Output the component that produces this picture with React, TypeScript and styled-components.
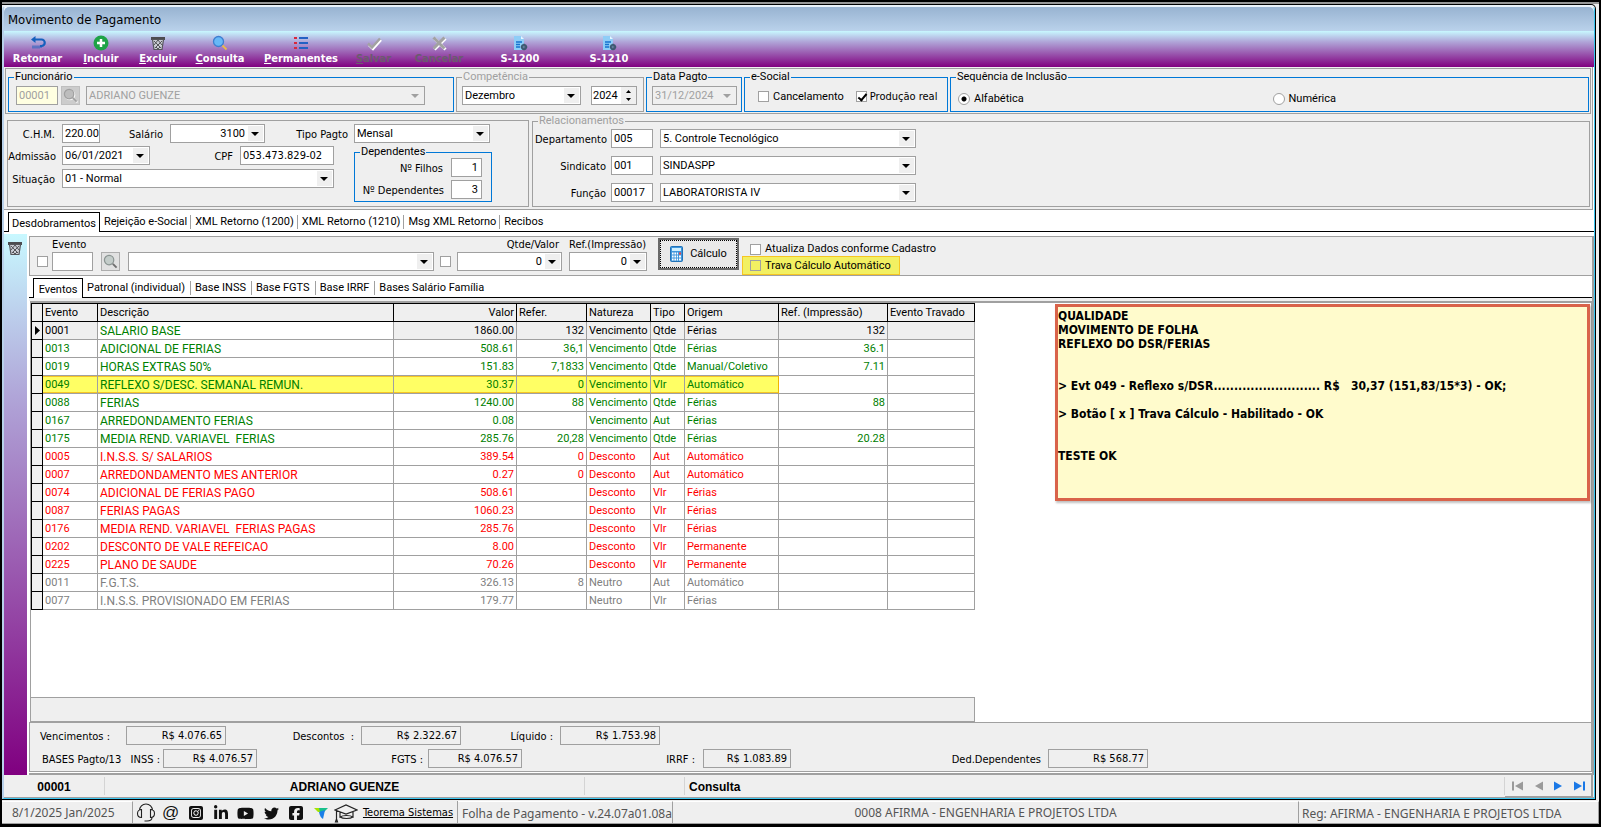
import React from "react";
import styled, { createGlobalStyle, css } from "styled-components";
import { FaSquareFacebook, FaSquareInstagram, FaLinkedinIn, FaTwitter, FaYoutube } from "react-icons/fa6";

const sans = `Roboto, "Liberation Sans", sans-serif`;
const label = `"DejaVu Sans Condensed", "DejaVu Sans", sans-serif`;
const statusFont = `"Noto Sans", "Open Sans", sans-serif`;
const face = "#efefef";
const line = "#a0a0a0";
const accent = "#0078d7";
const amber = "#f6c623";

const Global = createGlobalStyle`
  * { box-sizing: border-box; }
  body { margin: 0; background: #000; font: 11px/14px ${sans}; color: #000; }
  button, input, select { font: inherit; color: inherit; margin: 0; padding: 0; border-radius: 0; }
`;

/* ---------- frame ---------- */

const Frame = styled.div`
  min-height: 100vh;
  display: flex;
  flex-direction: column;
  padding: 2px 2px 3px;
  background: #000;
`;
const Desktop = styled.div`
  flex: 1;
  display: flex;
  flex-direction: column;
  border-top: 2px solid #989898;
  background: ${face};
`;
const Shell = styled.div`
  flex: 1;
  display: flex;
  flex-direction: column;
  margin-right: 3px;
  border: solid #000;
  border-width: 1px 1px 1px 0;
  border-radius: 0 5px 0 0;
  overflow: hidden;
`;
const WindowBox = styled.main`
  flex: 1;
  display: flex;
  flex-direction: column;
  border-style: solid;
  border-width: 2px 1px 1px 2px;
  border-color: #eaf2fa #3cc6f0 #3cc6f0 #b9d1ea;
  border-radius: 5px 5px 0 0;
  background: #fff;
`;
const TitleBar = styled.h1`
  margin: 0;
  height: 24px;
  padding: 1px 4px;
  border-radius: 5px 5px 0 0;
  background: linear-gradient(#98b3d1, #bad2eb);
  font: 400 13px/24px ${label};
`;

/* ---------- toolbar ---------- */

const Toolbar = styled.nav`
  height: 36px;
  display: flex;
  background: linear-gradient(#c8f8ff, #b0a5d8 30%, #800080);
`;
const ToolButton = styled.button<{ $width: number }>`
  width: ${(p) => p.$width}px;
  display: flex;
  flex-direction: column;
  align-items: center;
  padding-top: 4px;
  border: 0;
  background: none;
  color: #fff;
  font: 700 11px/15px ${label};
  &:disabled { color: #6b5a6e; }
  svg { width: 16px; height: 16px; display: block; flex: none; }
`;

/* ---------- form controls ---------- */

const Group = styled.fieldset<{ $muted?: boolean; $width?: number; $side?: number; $top?: number }>`
  flex: ${(p) => (p.$width ? "none" : "1")};
  width: ${(p) => (p.$width ? p.$width + "px" : "auto")};
  min-width: 0;
  margin: 0;
  padding: ${(p) => p.$top ?? 3}px ${(p) => p.$side ?? 7}px 0;
  border: 1px solid ${(p) => (p.$muted ? line : accent)};
  legend {
    margin-left: ${(p) => 5 - (p.$side ?? 7)}px;
    padding: 0 1px;
    line-height: 12px;
    color: ${(p) => (p.$muted ? "#a0a0a0" : "#000")};
  }
`;
const Line = styled.div`
  display: flex;
  align-items: center;
`;
const Space = styled.span<{ $w: number }>`
  flex: none;
  width: ${(p) => p.$w}px;
`;
const Caption = styled.label<{ $width?: number; $pad?: number }>`
  flex: none;
  width: ${(p) => (p.$width ? p.$width + "px" : "auto")};
  padding-top: 2px;
  padding-right: ${(p) => p.$pad ?? 0}px;
  text-align: right;
  white-space: pre;
  font-family: ${label};
`;
const TextBox = styled.input<{ $width: number; $right?: boolean; $tahoma?: boolean; $tone?: string }>`
  flex: none;
  width: ${(p) => p.$width}px;
  height: 19px;
  padding: 0 ${(p) => (p.$right ? 3 : 0)}px 0 2px;
  border: 1px solid ${line};
  background: ${(p) => p.$tone ?? "#fff"};
  text-align: ${(p) => (p.$right ? "right" : "left")};
  font-family: ${(p) => (p.$tahoma ? label : sans)};
  &:disabled { color: #a0a0a0; }
`;
const ComboBox = styled.span<{ $width: number; $right?: boolean; $off?: boolean }>`
  position: relative;
  flex: none;
  display: block;
  width: ${(p) => p.$width}px;
  height: 19px;
  border: 1px solid ${line};
  background: ${(p) => (p.$off ? face : "#fff")};
  select {
    position: relative;
    z-index: 1;
    display: block;
    width: 100%;
    height: 100%;
    padding: 1px 19px 0 2px;
    border: 0;
    appearance: none;
    background: transparent;
    text-align-last: ${(p) => (p.$right ? "right" : "left")};
    opacity: 1;
  }
  select:disabled { color: #a0a0a0; }
  &::before {
    content: "";
    position: absolute;
    inset: 1px 1px 1px auto;
    width: 15px;
    background: ${face};
  }
  &::after {
    content: "";
    position: absolute;
    right: 5px;
    top: 7px;
    border: 4px solid transparent;
    border-top-color: ${(p) => (p.$off ? "#a0a0a0" : "#000")};
    border-bottom: 0;
  }
`;
const Combo = (p: { id: string; value: string; width: number; right?: boolean; off?: boolean; name?: string }) => (
  <ComboBox $width={p.width} $right={p.right} $off={p.off}>
    <select id={p.id} aria-label={p.name} disabled={p.off} defaultValue={p.value}>
      <option>{p.value}</option>
    </select>
  </ComboBox>
);
const Check = styled.input<{ $clear?: boolean }>`
  appearance: none;
  flex: none;
  position: relative;
  width: 11px;
  height: 11px;
  border: 1px solid ${line};
  background: ${(p) => (p.$clear ? "transparent" : "#fff")};
  &:checked::before {
    content: "";
    position: absolute;
    left: 3px;
    top: 0;
    width: 3px;
    height: 7px;
    border: solid #000;
    border-width: 0 2px 2px 0;
    transform: rotate(40deg);
  }
`;
const Radio = styled.input`
  appearance: none;
  flex: none;
  width: 12px;
  height: 12px;
  border: 1px solid ${line};
  border-radius: 50%;
  background: #fff;
  &:checked { background: radial-gradient(#000 0 2px, #fff 3px); }
`;
const Choice = styled.label<{ $tahoma?: boolean; $gap?: number }>`
  display: flex;
  align-items: center;
  gap: ${(p) => p.$gap ?? 4}px;
  white-space: nowrap;
  font-family: ${(p) => (p.$tahoma ? label : sans)};
`;
const SmallButton = styled.button`
  flex: none;
  width: 19px;
  height: 19px;
  display: grid;
  place-items: center;
  border: 1px solid #adadad;
  background: #e1e1e1;
  &:disabled { background: #ccc; border-color: #bfbfbf; }
`;
const SpinBox = styled.span`
  display: flex;
  width: 46px;
  height: 19px;
  border: 1px solid ${line};
  background: #fff;
  input { width: 29px; padding: 0 0 0 1px; border: 0; background: none; }
`;
const SpinButtons = styled.span`
  display: flex;
  flex-direction: column;
  button {
    flex: 1;
    width: 15px;
    display: grid;
    place-items: center;
    border: 0;
    background: ${face};
  }
  svg { display: block; }
`;

/* ---------- header panels ---------- */

const HeaderArea = styled.div`
  margin-right: 1px;
  border-right: 1px solid ${line};
  border-bottom: 1px solid ${line};
  background: ${face};
`;
const EmployeePanel = styled.section`
  display: flex;
  gap: 2px;
  margin: 1px 1px 0 1px;
  padding: 2px 1px 1px 2px;
  border: 1px solid ${line};
`;
const GroupRow = styled.div`
  display: flex;
  align-items: center;
  height: 24px;
  padding-bottom: 5px;
`;
const RadioRow = styled.div`
  display: grid;
  grid-template-columns: 1fr 1fr;
  gap: 6px;
  align-items: center;
  height: 24px;
  padding-top: 2px;
`;
const DetailPanel = styled.section`
  display: flex;
  gap: 3px;
  padding: 1px 2px 2px 3px;
`;
const ContractBox = styled.div`
  width: 522px;
  margin-top: 5px;
  padding: 3px 0 4px;
  border: 1px solid ${line};
  display: flex;
  flex-direction: column;
  gap: 3px;
`;
const ContractBody = styled.div`
  display: flex;
  gap: 20px;
`;
const Stack = styled.div<{ $gap: number }>`
  display: flex;
  flex-direction: column;
  gap: ${(p) => p.$gap}px;
`;
const Dependents = styled(Group)`
  padding: 0 9px 2px 3px;
  legend { margin-left: 2px; }
`;

/* ---------- tabs ---------- */

const Tabs = styled.div<{ $pad: number }>`
  display: flex;
  align-items: flex-end;
  height: 22px;
  padding-left: 5px;
  border-bottom: 1px solid #000;
  background: #fff;
  span { padding-right: ${(p) => p.$pad}px; }
`;
const Tab = styled.button<{ $active?: boolean }>`
  height: 20px;
  padding: 2px 0 0;
  border: 0;
  background: #fff;
  white-space: nowrap;
  span {
    display: block;
    padding-left: 4px;
    border-right: 1px solid ${line};
  }
  &:last-child span { border: 0; }
  ${(p) =>
    p.$active &&
    css`
      min-width: 50px;
      margin: 0 0 -1px -1px;
      border: solid #000;
      border-width: 1px 1px 0 1px;
      span { border: 0; padding: 0 3px; }
    `}
`;

/* ---------- body ---------- */

const Body = styled.div`
  flex: 1;
  display: flex;
  gap: 2px;
  padding-top: 2px;
`;
const Rail = styled.aside`
  width: 23px;
  padding-top: 6px;
  background: linear-gradient(#c8f8ff, #b0a5d8 30%, #800080);
  button { display: block; width: 100%; padding-right: 1px; border: 0; background: none; }
  svg { display: block; width: 16px; height: 16px; margin: 0 auto; }
`;
const Work = styled.div`
  flex: 1;
  min-width: 0;
  display: flex;
  flex-direction: column;
  margin-top: 2px;
  border-right: 2px solid ${line};
  border-bottom: 2px solid ${line};
`;
const FilterBar = styled.section`
  display: flex;
  align-items: flex-end;
  height: 40px;
  padding: 0 7px 4px;
  border: 1px solid ${line};
  border-right: 0;
  background: ${face};
`;
const Boxed = styled.span`
  display: flex;
  align-items: center;
  height: 19px;
`;
const Field = styled.div<{ $end?: boolean }>`
  display: flex;
  flex-direction: column;
  align-items: ${(p) => (p.$end ? "flex-end" : "flex-start")};
`;
const CalcButton = styled.button`
  width: 81px;
  height: 32px;
  margin-bottom: 1px;
  border: 2px solid #696969;
  background: #e9e9e9;
  span {
    display: flex;
    align-items: center;
    justify-content: center;
    gap: 7px;
    height: 28px;
    border: 1px dotted #000;
  }
`;
const Options = styled.div`
  align-self: stretch;
  margin: 0 0 -4px 3px;
  display: flex;
  flex-direction: column;
  align-items: flex-start;
  justify-content: flex-end;
`;
const Option = styled.div<{ $marked?: boolean }>`
  height: ${(p) => (p.$marked ? 19 : 14)}px;
  padding: 0 8px 0 7px;
  display: flex;
  align-items: center;
  border: solid ${(p) => (p.$marked ? amber : "transparent")};
  border-width: ${(p) => (p.$marked ? "1px" : "0 1px")};
  background: ${(p) => (p.$marked ? "#f2f062" : "transparent")};
`;
const GridArea = styled.section`
  flex: 1;
  display: flex;
  margin-left: 1px;
  border: solid ${line};
  border-width: 2px 1px 0 1px;
  background: #fff;
`;
const TabGap = styled.div`
  height: 3px;
  background: ${face};
`;
const GridColumn = styled.div`
  flex: none;
  width: 944px;
  display: flex;
  flex-direction: column;
  justify-content: space-between;
`;
const GridFooter = styled.div`
  height: 25px;
  border: 1px solid ${line};
  border-left: 0;
  background: ${face};
`;
const Table = styled.table`
  width: 100%;
  table-layout: fixed;
  border-collapse: separate;
  border-spacing: 0;
  border-top: 1px solid #000;
  border-left: 1px solid #000;
  line-height: 16px;
  th { background: ${face}; border-color: #000; font-weight: 400; }
`;
const Cell = styled.td<{ $right?: boolean; $upper?: boolean; $tone?: string }>`
  height: 18px;
  padding: 1px 2px 0;
  border: solid ${line};
  border-width: 0 1px 1px 0;
  overflow: hidden;
  white-space: pre;
  text-align: ${(p) => (p.$right ? "right" : "left")};
  font-size: ${(p) => (p.$upper ? 12 : 11)}px;
  background: ${(p) => p.$tone ?? "transparent"};
`;
const MarkCell = styled.td`
  height: 18px;
  padding: 0 0 0 3px;
  border: solid #000;
  border-width: 0 1px 1px 0;
  background: ${face};
  svg { display: block; }
`;
const Row = styled.tr<{ $color: string; $marked?: boolean }>`
  color: ${(p) => p.$color};
  ${(p) =>
    p.$marked &&
    css`
      ${Cell}:nth-child(-n + 8) {
        background: #ffff64;
        box-shadow: inset 0 1px ${amber}, inset 0 -1px ${amber};
      }
      ${Cell}:nth-child(8) {
        border-right-color: #f0b400;
      }
    `}
`;
const Positive = styled.span`
  color: #008000;
`;
const Note = styled.pre`
  flex: 1;
  align-self: flex-start;
  min-width: 0;
  height: 197px;
  margin: 1px 1px 0 80px;
  padding: 2px 0;
  border: 3px solid #d9634a;
  background: #fffbcc;
  box-shadow: 1px 2px 2px rgba(0, 0, 0, 0.25);
  font: 700 12px/14px ${label};
`;
const Summary = styled.section`
  display: flex;
  flex-direction: column;
  gap: 4px;
  height: 50px;
  margin-bottom: 1px;
  padding-top: 3px;
  border: 1px solid ${line};
  background: ${face};
`;

/* ---------- status bars ---------- */

const RecordBar = styled.footer`
  display: flex;
  height: 23px;
  border-bottom: 1px solid ${line};
  background: ${face};
  font: 700 12px/21px "Liberation Sans", sans-serif;
`;
const RecordCell = styled.div<{ $width?: number; $start?: boolean }>`
  flex: ${(p) => (p.$width ? "none" : "1")};
  width: ${(p) => (p.$width ? p.$width + "px" : "auto")};
  margin: 2px 0;
  padding: 0 4px;
  border-right: 1px solid #d4d4d4;
  text-align: ${(p) => (p.$start ? "left" : "center")};
`;
const Navigator = styled.div`
  display: flex;
  width: 88px;
  margin-right: 1px;
  padding: 0 3px;
  border: solid ${line};
  border-width: 0 2px 1px 0;
  button { flex: 1; display: grid; place-items: center; border: 0; background: none; }
`;
const AppBar = styled.footer`
  display: flex;
  height: 24px;
  padding-top: 1px;
  border-bottom: 1px solid ${line};
  background: ${face};
  color: #555;
  font: 12px/20px ${statusFont};
`;
const AppCell = styled.div<{ $width?: number; $center?: boolean; $pad?: number; $low?: boolean }>`
  flex: ${(p) => (p.$width ? "none" : "1")};
  width: ${(p) => (p.$width ? p.$width + "px" : "auto")};
  padding: ${(p) => (p.$low ? 2 : 1)}px 0 0 ${(p) => p.$pad ?? 0}px;
  border-top: 1px solid #fff;
  border-right: 1px solid ${line};
  text-align: ${(p) => (p.$center ? "center" : "left")};
  white-space: nowrap;
`;
const Social = styled.div`
  display: flex;
  align-items: center;
  flex: none;
  width: 226px;
  padding-top: 2px;
  a { flex: 1; display: grid; place-items: center; color: #111; text-decoration: none; font: 17px/20px "Liberation Sans", sans-serif; }
`;
const SiteLink = styled.a`
  flex: none;
  width: 99px;
  border-right: 1px solid ${line};
  color: #000;
  font: 11px/24px ${label};
  text-align: center;
  white-space: nowrap;
`;

/* ---------- drawings ---------- */

const ReturnIcon = () => (
  <svg viewBox="0 0 16 16"><path d="M3 4.500h8.500a2.800 2.800 0 0 1 0 6.500H10" fill="none" stroke="#1560bd" strokeWidth="2.200" /><path d="M5.500 1v7L1 4.500z" fill="#1560bd" /><path d="M3 10.500v3M5 10.500v3M7 10.500v3M9 10.500v3M11 10.500v2.500" stroke="#1560bd" /></svg>
);
const AddIcon = () => (
  <svg viewBox="0 0 16 16"><circle cx="8" cy="8" r="7.500" fill="#1fa347" /><path d="M8 4v8M4 8h8" stroke="#fff" strokeWidth="2.500" /></svg>
);
const BinIcon = () => (
  <svg viewBox="0 0 16 16"><path d="M1 2h14v3H1z" fill="#4c4c50" /><path d="M2.500 4.500l1.500 10h8l1.500-10z" fill="#c9ccd4" stroke="#55555a" strokeWidth="1.200" /><path d="M4 6l7 7M8 5l4 5M12 6l-7 7M8 5l-4 5M6 12l2 2 2-2" stroke="#55555a" fill="none" /></svg>
);
const LensIcon = ({ dim, size = 16 }: { dim?: boolean; size?: number }) => (
  <svg viewBox="0 0 16 16" width={size} height={size}><circle cx="6.500" cy="6.500" r="5" fill={dim ? "#c3ccc9" : "#67b8f7"} stroke={dim ? "#8b9492" : "#3e7fd0"} strokeWidth="1.300" /><path d="M10.500 10.500l4 4" stroke={dim ? "#6e6e6e" : "#e8b84c"} strokeWidth="2" /></svg>
);
const FadedLens = () => (
  <svg viewBox="0 0 16 16" width="15" height="15" fill="none"><circle cx="7.500" cy="7.500" r="5" stroke="#f4f4f4" strokeWidth="1.300" /><path d="M11.500 11.500l4 4" stroke="#f4f4f4" strokeWidth="2" /><circle cx="6.500" cy="6.500" r="5" fill="#bdbdbd" stroke="#a0a0a0" strokeWidth="1.300" /><path d="M10.500 10.500l4 4" stroke="#a0a0a0" strokeWidth="2" /></svg>
);
const ListIcon = () => (
  <svg viewBox="0 0 16 16"><path d="M1 3h3M1 8h3M1 13h3" stroke="#d8283c" strokeWidth="2.200" /><path d="M6 3h9M6 8h9M6 13h9" stroke="#2461c4" strokeWidth="2.200" /></svg>
);
const TickIcon = () => (
  <svg viewBox="0 0 16 16"><path d="M3 10l4 4 8-9" fill="none" stroke="#fff" strokeWidth="2.500" /><path d="M2 8.500l4 4 8-9" fill="none" stroke="#a2a2a2" strokeWidth="2.500" /></svg>
);
const CrossIcon = () => (
  <svg viewBox="0 0 16 16"><path d="M3.500 3.500l11 11M14.500 3.500l-11 11" stroke="#fff" strokeWidth="3" /><path d="M2.500 2.500l11 11M13.500 2.500l-11 11" stroke="#a2a2a2" strokeWidth="3" /></svg>
);
const DocIcon = () => (
  <svg viewBox="0 0 16 16"><path d="M2 1h7l3 3v11H2z" fill="#8fcdf7" /><path d="M9 1v3h3z" fill="#e6f6ff" /><path d="M4 7h6M4 9.500h4M4 12h4" stroke="#1573cf" strokeWidth="1.300" /><circle cx="12" cy="12" r="2.200" fill="none" stroke="#3c5870" strokeWidth="1.800" /><path d="M12 8.500v7M8.500 12h7" stroke="#3c5870" strokeWidth=".8" /></svg>
);
const CalcIcon = () => (
  <svg width="13" height="16" viewBox="0 0 13 16"><rect x=".5" y=".5" width="12" height="15" rx="1" fill="#3f97dd" stroke="#2173b8" /><path d="M2 2h9v3H2z" fill="#cdefff" /><path d="M2 7.500h6M2 10.500h6M2 13.500h6" stroke="#fff" strokeWidth="1.800" strokeDasharray="1.600 .8" /><path d="M9 7.500h2" stroke="#e44" strokeWidth="1.800" /><path d="M9 10.500h2M9 13.500h2" stroke="#fff" strokeWidth="1.800" /></svg>
);
const Headset = () => (
  <svg width="20" height="20" viewBox="0 0 20 20" fill="none" stroke="#222" strokeWidth="1.100"><path d="M3.500 7.500a6.500 6.500 0 0 1 13 0M5.500 6.500C3 6.500 1.500 8 1.500 10.500s1.500 4 4 4zM14.500 6.500c2.500 0 4 1.500 4 4s-1.500 4-4 4zM16 14.500c0 2.500-2 3.500-5 3.500M8.500 18h3" /></svg>
);
const Bird = () => (
  <svg width="14" height="13" viewBox="0 0 14 13"><path d="M0 1h6l2 4H4z" fill="#a4e400" /><path d="M5 1h9l-4 4H6z" fill="#19c08c" /><path d="M5 5l6-2-2 9c-2-1-3-3-4-7z" fill="#1a7fe8" /></svg>
);
const Cap = () => (
  <svg width="24" height="20" viewBox="0 0 24 20" fill="none" stroke="#222" strokeWidth="1.200"><path d="M1 7l11-5 11 5-11 4zM6 9v5c3-2 10-2 13 0V9M6 14c3 2 10 2 13 0M2.500 7.500V16M1.500 19l1-3 1 3z" /></svg>
);
const Arrow = ({ back, bar }: { back?: boolean; bar?: boolean }) => (
  <svg width="13" height="10" viewBox="0 0 13 10" fill={back ? "#9a9a9a" : "#1a78e6"}>
    {back ? <path d="M11 .5v9L3 5z" /> : <path d="M2 .5v9L10 5z" />}
    {bar && <path d={back ? "M0 .5h2v9H0z" : "M11 .5h2v9h-2z"} />}
  </svg>
);
const Pointer = () => (
  <svg width="6" height="9" viewBox="0 0 6 9"><path d="M0 0v9l5-4.500z" /></svg>
);
const Spin = ({ down }: { down?: boolean }) => (
  <svg width="5" height="3" viewBox="0 0 5 3"><path d={down ? "M0 0h5L2.500 3z" : "M0 3h5L2.500 0z"} /></svg>
);

/* ---------- data ---------- */

const tools: { text: string; key?: boolean; width: number; icon: React.ReactNode; off?: boolean }[] = [
  { text: "Retornar", width: 67, icon: <ReturnIcon /> },
  { text: "Incluir", key: true, width: 60, icon: <AddIcon /> },
  { text: "Excluir", key: true, width: 54, icon: <BinIcon /> },
  { text: "Consulta", key: true, width: 70, icon: <LensIcon /> },
  { text: "Permanentes", key: true, width: 92, icon: <ListIcon /> },
  { text: "Salvar", key: true, width: 53, icon: <TickIcon />, off: true },
  { text: "Cancelar", width: 78, icon: <CrossIcon />, off: true },
  { text: "S-1200", width: 84, icon: <DocIcon /> },
  { text: "S-1210", width: 94, icon: <DocIcon /> },
];

const columns = [11, 55, 296, 123, 70, 64, 34, 94, 109, 87];
const heads = ["Evento", "Descrição", "Valor", "Refer.", "Natureza", "Tipo", "Origem", "Ref. (Impressão)", "Evento Travado"];
const events: string[][] = [
  ["0001", "SALARIO BASE", "1860.00", "132", "Vencimento", "Qtde", "Férias", "132"],
  ["0013", "ADICIONAL DE FERIAS", "508.61", "36,1", "Vencimento", "Qtde", "Férias", "36.1"],
  ["0019", "HORAS EXTRAS 50%", "151.83", "7,1833", "Vencimento", "Qtde", "Manual/Coletivo", "7.11"],
  ["0049", "REFLEXO S/DESC. SEMANAL REMUN.", "30.37", "0", "Vencimento", "Vlr", "Automático", ""],
  ["0088", "FERIAS", "1240.00", "88", "Vencimento", "Qtde", "Férias", "88"],
  ["0167", "ARREDONDAMENTO FERIAS", "0.08", "", "Vencimento", "Aut", "Férias", ""],
  ["0175", "MEDIA REND. VARIAVEL  FERIAS", "285.76", "20,28", "Vencimento", "Qtde", "Férias", "20.28"],
  ["0005", "I.N.S.S. S/ SALARIOS", "389.54", "0", "Desconto", "Aut", "Automático", ""],
  ["0007", "ARREDONDAMENTO MES ANTERIOR", "0.27", "0", "Desconto", "Aut", "Automático", ""],
  ["0074", "ADICIONAL DE FERIAS PAGO", "508.61", "", "Desconto", "Vlr", "Férias", ""],
  ["0087", "FERIAS PAGAS", "1060.23", "", "Desconto", "Vlr", "Férias", ""],
  ["0176", "MEDIA REND. VARIAVEL  FERIAS PAGAS", "285.76", "", "Desconto", "Vlr", "Férias", ""],
  ["0202", "DESCONTO DE VALE REFEICAO", "8.00", "", "Desconto", "Vlr", "Permanente", ""],
  ["0225", "PLANO DE SAUDE", "70.26", "", "Desconto", "Vlr", "Permanente", ""],
  ["0011", "F.G.T.S.", "326.13", "8", "Neutro", "Aut", "Automático", ""],
  ["0077", "I.N.S.S. PROVISIONADO EM FERIAS", "179.77", "", "Neutro", "Vlr", "Férias", ""],
];
const tone: Record<string, string> = { Vencimento: "#008000", Desconto: "#ff0000", Neutro: "#808080" };

const totals = [
  [
    { id: "venc", text: "Vencimentos :", value: "R$ 4.076.65", before: 96, pad: 16, width: 100 },
    { id: "desc", text: "Descontos  :", value: "R$ 2.322.67", before: 135, pad: 7, width: 100 },
    { id: "liq", text: "Líquido :", value: "R$ 1.753.98", before: 99, pad: 7, width: 100 },
  ],
  [
    { id: "inss", text: "BASES Pagto/13   INSS :", value: "R$ 4.076.57", before: 133, pad: 3, width: 94 },
    { id: "fgts", text: "FGTS :", value: "R$ 4.076.57", before: 171, pad: 5, width: 94 },
    { id: "irrf", text: "IRRF :", value: "R$ 1.083.89", before: 181, pad: 8, width: 88 },
    { id: "ded", text: "Ded.Dependentes", value: "R$ 568.77", before: 257, pad: 7, width: 100 },
  ],
];

const note = `QUALIDADE
MOVIMENTO DE FOLHA
REFLEXO DO DSR/FERIAS


> Evt 049 - Reflexo s/DSR.......................... R$   30,37 (151,83/15*3) - OK;

> Botão [ x ] Trava Cálculo - Habilitado - OK


TESTE OK`;

const relations = [
  { text: "Departamento", code: "005", name: "5. Controle Tecnológico" },
  { text: "Sindicato", code: "001", name: "SINDASPP" },
  { text: "Função", code: "00017", name: "LABORATORISTA IV" },
];

const TabStrip = ({ items, pad }: { items: string[]; pad: number }) => (
  <Tabs role="tablist" $pad={pad}>
    {items.map((t, i) => (
      <Tab key={t} role="tab" aria-selected={i === 0} $active={i === 0}><span>{t}</span></Tab>
    ))}
  </Tabs>
);

export default function App() {
  return (
    <Frame>
      <Global />
      <Desktop>
        <Shell>
          <WindowBox>
            <TitleBar>Movimento de Pagamento</TitleBar>
            <Toolbar>
              {tools.map((t) => (
                <ToolButton key={t.text} $width={t.width} disabled={t.off}>
                  {t.icon}
                  <span>{t.key ? <><u>{t.text[0]}</u>{t.text.slice(1)}</> : t.text}</span>
                </ToolButton>
              ))}
            </Toolbar>

            <HeaderArea>
              <EmployeePanel>
                <Group $width={446}>
                  <legend>Funcionário</legend>
                  <GroupRow>
                    <TextBox $width={42} $tone="#ffffe1" aria-label="Código" defaultValue="00001" disabled />
                    <Space $w={3} />
                    <SmallButton disabled aria-label="Procurar funcionário"><FadedLens /></SmallButton>
                    <Space $w={6} />
                    <Combo id="func" name="Funcionário" value="ADRIANO GUENZE" width={339} off />
                  </GroupRow>
                </Group>
                <Group $muted $width={188} $side={5}>
                  <legend>Competência</legend>
                  <GroupRow>
                    <Combo id="mes" name="Mês" value="Dezembro" width={119} />
                    <Space $w={10} />
                    <SpinBox>
                      <input aria-label="Ano" defaultValue="2024" />
                      <SpinButtons>
                        <button aria-label="Mais"><Spin /></button>
                        <button aria-label="Menos"><Spin down /></button>
                      </SpinButtons>
                    </SpinBox>
                  </GroupRow>
                </Group>
                <Group $width={96} $side={5}>
                  <legend>Data Pagto</legend>
                  <GroupRow><Combo id="data" name="Data Pagto" value="31/12/2024" width={85} off /></GroupRow>
                </Group>
                <Group $width={204} $side={13} $top={4}>
                  <legend>e-Social</legend>
                  <GroupRow>
                    <Choice><Check type="checkbox" />Cancelamento</Choice>
                    <Space $w={12} />
                    <Choice $tahoma $gap={3}><Check type="checkbox" defaultChecked />Produção real</Choice>
                  </GroupRow>
                </Group>
                <Group>
                  <legend>Sequência de Inclusão</legend>
                  <RadioRow>
                    <Choice><Radio type="radio" name="seq" defaultChecked />Alfabética</Choice>
                    <Choice><Radio type="radio" name="seq" />Numérica</Choice>
                  </RadioRow>
                </Group>
              </EmployeePanel>

              <DetailPanel>
                <ContractBox>
                  <Line>
                    <Caption htmlFor="chm" $width={54} $pad={7}>C.H.M.</Caption>
                    <TextBox id="chm" $width={38} defaultValue="220.00" />
                    <Caption htmlFor="sal" $width={70} $pad={7}>Salário</Caption>
                    <Combo id="sal" value="3100" width={95} right />
                    <Caption htmlFor="tipo" $width={89} $pad={6}>Tipo Pagto</Caption>
                    <Combo id="tipo" value="Mensal" width={136} />
                  </Line>
                  <ContractBody>
                    <Stack $gap={4}>
                      <Line>
                        <Caption htmlFor="adm" $width={54} $pad={6}>Admissão</Caption>
                        <Combo id="adm" value="06/01/2021" width={88} />
                        <Caption htmlFor="cpf" $width={90} $pad={7}>CPF</Caption>
                        <TextBox id="cpf" $width={94} $tahoma defaultValue="053.473.829-02" />
                      </Line>
                      <Line>
                        <Caption htmlFor="sit" $width={54} $pad={7}>Situação</Caption>
                        <Combo id="sit" value="01 - Normal" width={272} />
                      </Line>
                    </Stack>
                    <Dependents $width={138}>
                      <legend>Dependentes</legend>
                      <Stack $gap={3}>
                        <Line>
                          <Caption htmlFor="filhos" $width={93} $pad={8}>Nº Filhos</Caption>
                          <TextBox id="filhos" $width={31} $right defaultValue="1" />
                        </Line>
                        <Line>
                          <Caption htmlFor="deps" $width={93} $pad={7}>Nº Dependentes</Caption>
                          <TextBox id="deps" $width={31} $right defaultValue="3" />
                        </Line>
                      </Stack>
                    </Dependents>
                  </ContractBody>
                </ContractBox>
                <Group $muted $side={2} $top={2}>
                  <legend>Relacionamentos</legend>
                  <Stack $gap={8}>
                    {relations.map((r) => (
                      <Line key={r.text}>
                        <Caption htmlFor={"c" + r.code} $width={76} $pad={5}>{r.text}</Caption>
                        <TextBox id={"c" + r.code} $width={42} defaultValue={r.code} />
                        <Space $w={7} />
                        <Combo id={"n" + r.code} name={r.text} value={r.name} width={256} />
                      </Line>
                    ))}
                  </Stack>
                </Group>
              </DetailPanel>
            </HeaderArea>

            <TabStrip pad={3} items={["Desdobramentos", "Rejeição e-Social", "XML Retorno (1200)", "XML Retorno (1210)", "Msg XML Retorno", "Recibos"]} />

            <Body>
              <Rail><button aria-label="Excluir evento"><BinIcon /></button></Rail>
              <Work>
                <FilterBar>
                  <Boxed><Check type="checkbox" aria-label="Filtrar evento" /></Boxed>
                  <Space $w={4} />
                  <Field>
                    <Caption htmlFor="ev">Evento</Caption>
                    <TextBox id="ev" $width={41} />
                  </Field>
                  <Space $w={8} />
                  <SmallButton aria-label="Procurar evento"><LensIcon dim size={15} /></SmallButton>
                  <Space $w={8} />
                  <Combo id="evn" name="Nome do evento" value="" width={306} />
                  <Space $w={6} />
                  <Boxed><Check type="checkbox" aria-label="Filtrar valor" /></Boxed>
                  <Space $w={6} />
                  <Field $end>
                    <Caption htmlFor="qt" $pad={3}>Qtde/Valor</Caption>
                    <Combo id="qt" value="0" width={105} right />
                  </Field>
                  <Space $w={7} />
                  <Field>
                    <Caption htmlFor="rf">Ref.(Impressão)</Caption>
                    <Combo id="rf" value="0" width={78} right />
                  </Field>
                  <Space $w={11} />
                  <CalcButton><span><CalcIcon />Cálculo</span></CalcButton>
                  <Options>
                    <Option><Choice><Check type="checkbox" />Atualiza Dados conforme Cadastro</Choice></Option>
                    <Option $marked><Choice><Check $clear type="checkbox" />Trava Cálculo Automático</Choice></Option>
                  </Options>
                </FilterBar>

                <TabStrip pad={5} items={["Eventos", "Patronal (individual)", "Base INSS", "Base FGTS", "Base IRRF", "Bases Salário Família"]} />
                <TabGap />

                <GridArea>
                  <GridColumn>
                    <Table>
                      <colgroup>{columns.map((w, i) => <col key={i} width={w} />)}</colgroup>
                      <thead>
                        <tr>
                          <MarkCell as="th" />
                          {heads.map((h) => <Cell as="th" key={h} $right={h === "Valor"}>{h}</Cell>)}
                        </tr>
                      </thead>
                      <tbody>
                        {events.map((e, r) => (
                          <Row key={e[0]} $color={r === 0 ? "#000" : tone[e[4]]} $marked={e[0] === "0049"}>
                            <MarkCell>{r === 0 && <Pointer />}</MarkCell>
                            {[...e, ""].map((v, c) => (
                              <Cell key={c} $right={c === 2 || c === 3 || c === 7} $upper={c === 1} $tone={r === 0 && c !== 1 ? face : undefined}>
                                {r === 0 && c === 1 ? <Positive>{v}</Positive> : v}
                              </Cell>
                            ))}
                          </Row>
                        ))}
                      </tbody>
                    </Table>
                    <GridFooter />
                  </GridColumn>
                  <Note>{note}</Note>
                </GridArea>

                <Summary>
                  {totals.map((row, i) => (
                    <Line key={i}>
                      {row.map((t) => (
                        <React.Fragment key={t.id}>
                          <Caption htmlFor={t.id} $width={t.before} $pad={t.pad}>{t.text}</Caption>
                          <TextBox id={t.id} $width={t.width} $right $tahoma $tone={face} readOnly value={t.value} />
                        </React.Fragment>
                      ))}
                    </Line>
                  ))}
                </Summary>
              </Work>
            </Body>

            <RecordBar>
              <RecordCell $width={101}>00001</RecordCell>
              <RecordCell $width={480}>ADRIANO GUENZE</RecordCell>
              <RecordCell $width={100} />
              <RecordCell $start>Consulta</RecordCell>
              <Navigator>
                <button aria-label="Primeiro" disabled><Arrow back bar /></button>
                <button aria-label="Anterior" disabled><Arrow back /></button>
                <button aria-label="Próximo"><Arrow /></button>
                <button aria-label="Último"><Arrow bar /></button>
              </Navigator>
            </RecordBar>
          </WindowBox>
        </Shell>

        <AppBar>
          <AppCell $width={131} $pad={10}>8/1/2025 Jan/2025</AppCell>
          <Social>
            <a href="#suporte" aria-label="Suporte"><Headset /></a>
            <a href="#email">@</a>
            <a href="#instagram" aria-label="Instagram"><FaSquareInstagram size={16} /></a>
            <a href="#linkedin" aria-label="LinkedIn"><FaLinkedinIn size={16} /></a>
            <a href="#youtube" aria-label="YouTube"><FaYoutube size={17} /></a>
            <a href="#twitter" aria-label="Twitter"><FaTwitter size={15} /></a>
            <a href="#facebook" aria-label="Facebook"><FaSquareFacebook size={16} /></a>
            <a href="#site" aria-label="Site"><Bird /></a>
            <a href="#cursos" aria-label="Cursos"><Cap /></a>
          </Social>
          <SiteLink href="#teorema">Teorema Sistemas</SiteLink>
          <AppCell $width={215} $pad={4} $low>Folha de Pagamento - v.24.07a01.08a</AppCell>
          <AppCell $center>0008 AFIRMA - ENGENHARIA E PROJETOS LTDA</AppCell>
          <AppCell $width={300} $pad={3} $low>Reg: AFIRMA - ENGENHARIA E PROJETOS LTDA</AppCell>
        </AppBar>
      </Desktop>
    </Frame>
  );
}
